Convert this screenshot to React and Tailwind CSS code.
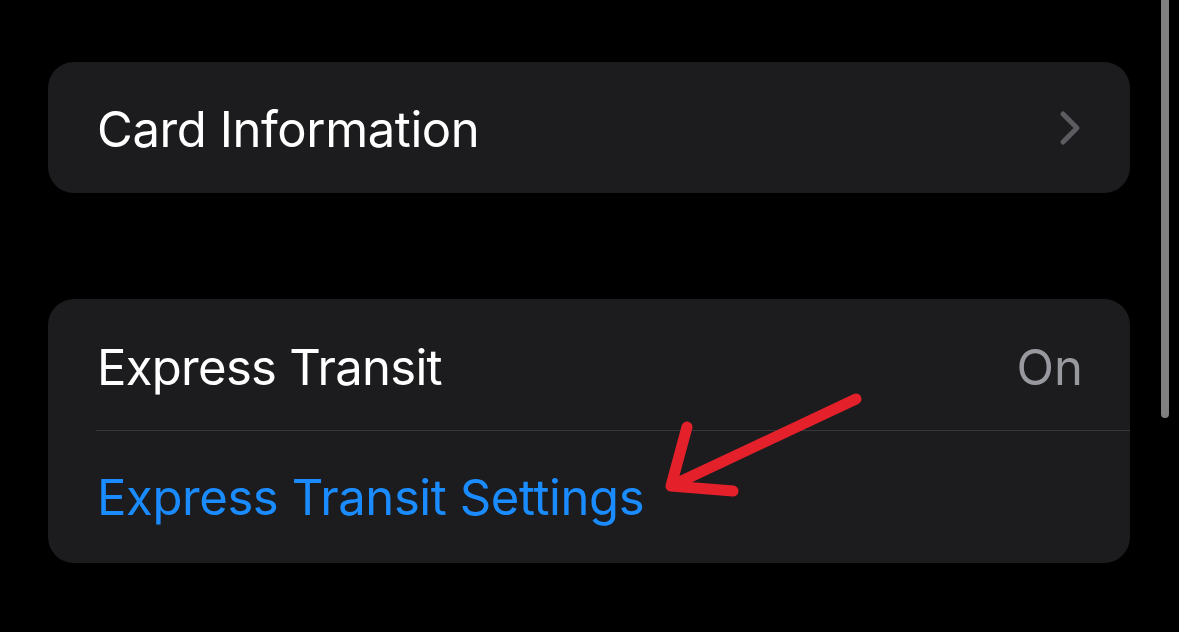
export default function App() {
  return (
    <div className="relative w-[1179px] h-[632px] bg-black overflow-hidden" style={{ fontFamily: 'Inter, "Liberation Sans", sans-serif' }}>
      <div className="pt-[62px] pl-[48px] pr-[49px] flex flex-col gap-[106px]">
        <div className="h-[131px] rounded-[26px] bg-[#1c1c1e] flex items-center justify-between pl-[49px] pr-[50px]">
          <span className="text-white text-[49px] tracking-[-0.4px] leading-none pt-[3px]">Card Information</span>
          <svg width="22" height="36" viewBox="0 0 22 36" className="mr-[-1px]">
            <path d="M4 4 L18 18 L4 32" fill="none" stroke="#5b5b60" strokeWidth="5" strokeLinecap="round" strokeLinejoin="round" />
          </svg>
        </div>
        <div className="rounded-[26px] bg-[#1c1c1e] flex flex-col">
          <div className="h-[131px] flex items-center justify-between pl-[49px] pr-[47px] pt-[5px]">
            <span className="text-white text-[49px] tracking-[-0.7px] leading-none">Express Transit</span>
            <span className="text-[#98989f] text-[49px] leading-none">On</span>
          </div>
          <div className="ml-[48px] h-px bg-[#38383a]" />
          <div className="h-[132px] flex items-center pl-[49px]">
            <span className="text-[#1a8cff] text-[49px] tracking-[-0.4px] leading-none">Express Transit Settings</span>
          </div>
        </div>
      </div>
      <div className="absolute left-[1161px] top-0 w-[8px] h-[418px] rounded-b-full bg-[#808080]" />
      <svg className="absolute left-0 top-0" width="1179" height="632">
        <path d="M856 399 L671 486 M687 427 L671 486 L733 491" fill="none" stroke="#e4212b" strokeWidth="11" strokeLinecap="round" strokeLinejoin="round" />
      </svg>
    </div>
  );
}
